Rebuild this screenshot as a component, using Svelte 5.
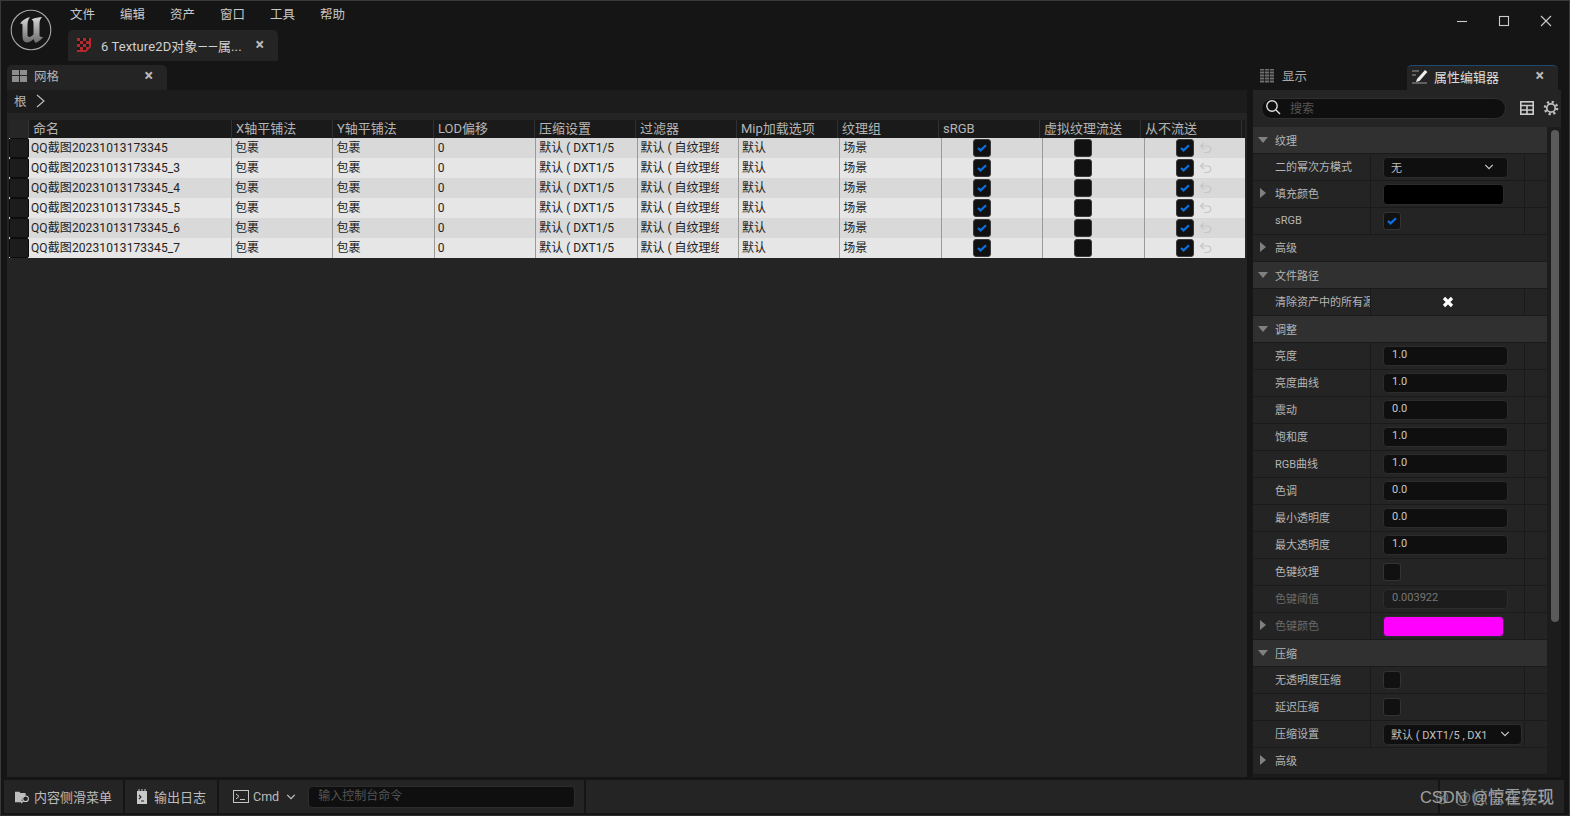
<script lang="ts">
  const menus = ['文件', '编辑', '资产', '窗口', '工具', '帮助'];
  const columns = ['X轴平铺法', 'Y轴平铺法', 'LOD偏移', '压缩设置', '过滤器', 'Mip加载选项', '纹理组', 'sRGB', '虚拟纹理流送', '从不流送'];
  const suffixes = ['', '_3', '_4', '_5', '_6', '_7'];
  const textCells = ['包裹', '包裹', '0', '默认 ( DXT1/5', '默认 ( 自纹理组', '默认', '场景'];

  const props = [
    { kind: 'section', label: '纹理' },
    { label: '二的幂次方模式', value: 'select', text: '无' },
    { label: '填充颜色', arrow: true, value: 'color', color: '#000' },
    { label: 'sRGB', value: 'check', on: true },
    { label: '高级', arrow: true, wide: true },
    { kind: 'section', label: '文件路径' },
    { label: '清除资产中的所有源', value: 'clear' },
    { kind: 'section', label: '调整' },
    { label: '亮度', value: 'num', text: '1.0' },
    { label: '亮度曲线', value: 'num', text: '1.0' },
    { label: '震动', value: 'num', text: '0.0' },
    { label: '饱和度', value: 'num', text: '1.0' },
    { label: 'RGB曲线', value: 'num', text: '1.0' },
    { label: '色调', value: 'num', text: '0.0' },
    { label: '最小透明度', value: 'num', text: '0.0' },
    { label: '最大透明度', value: 'num', text: '1.0' },
    { label: '色键纹理', value: 'check' },
    { label: '色键阈值', value: 'num', text: '0.003922', off: true },
    { label: '色键颜色', arrow: true, value: 'color', color: '#ff00ff', off: true },
    { kind: 'section', label: '压缩' },
    { label: '无透明度压缩', value: 'check' },
    { label: '延迟压缩', value: 'check' },
    { label: '压缩设置', value: 'select', text: '默认 ( DXT1/5 , DX1', long: true },
    { label: '高级', arrow: true, wide: true },
  ];
</script>

{#snippet tick()}
  <svg viewBox="0 0 12 10" width="10" height="8"><path d="M1 5 4.2 8 11 1.6" fill="none" stroke="#0a70e0" stroke-width="2.8"/></svg>
{/snippet}

{#snippet chevron()}
  <svg viewBox="0 0 12 8" width="10" height="6"><path d="M1 1.2 6 6.2 11 1.2" fill="none" stroke="#c4c4c4" stroke-width="1.7"/></svg>
{/snippet}

<div class="window">
  <header class="titlebar">
    <svg class="logo" viewBox="0 0 42 42" width="42" height="42">
      <defs>
        <linearGradient id="ue" x1="0" y1="0" x2="0" y2="1">
          <stop offset="0" stop-color="#d8d8d8"/>
          <stop offset="1" stop-color="#6a6a6a"/>
        </linearGradient>
      </defs>
      <circle cx="21" cy="21" r="19.8" fill="#161616" stroke="#a6a6a6" stroke-width="1.1"/>
      <path d="M10 15C12 11 16 9 20 8 18 11 17.5 13 17.5 16V26C17.5 28 19.5 28.5 21 27.5L23.5 25.5V14C23.5 12 22.5 11 21.5 10.5 25 8.5 29 8.5 32 8 30 10.5 29.5 12 29.5 15V27C30.5 28 32 28.5 33.5 28 31 30.5 28.5 32.5 26 34 24.5 33 24 31.5 23.5 30 21.5 32 19 33.5 17 33.5 13.5 33.5 12.5 30.5 12.5 27V16C12.5 15 11.5 14.5 10 15Z" fill="url(#ue)"/>
    </svg>
    <div class="title-main">
      <nav class="menu">
        {#each menus as m}<span>{m}</span>{/each}
      </nav>
      <div class="doc-tab">
        <svg viewBox="0 0 14 14" width="14" height="14">
          <rect width="14" height="14" fill="#b5282e"/>
          <path d="M3 0h3v3H3zM9 0h3v3H9zM0 3h3v3H0zM6 3h3v3H6zM3 6h3v3H3zM9 6h3v3H9zM0 9h3v3H0zM6 9h3v3H6z" fill="#1c1c1c"/>
          <path d="M9 14 14 9v5z" fill="#242424"/>
        </svg>
        <span class="doc-name">6 Texture2D对象——属...</span>
        <span class="x">×</span>
      </div>
    </div>
    <div class="win-btns">
      <svg viewBox="0 0 12 12" width="12" height="12"><path d="M1 6.5h10" stroke="#ccc" stroke-width="1.1"/></svg>
      <svg viewBox="0 0 12 12" width="12" height="12"><rect x="1.5" y="1.5" width="9" height="9" fill="none" stroke="#ccc" stroke-width="1.1"/></svg>
      <svg viewBox="0 0 12 12" width="12" height="12"><path d="M1 1 11 11M11 1 1 11" stroke="#ccc" stroke-width="1.1"/></svg>
    </div>
  </header>

  <main class="body">
    <section class="left">
      <div class="tab-row">
        <div class="panel-tab">
          <svg viewBox="0 0 15 12" width="15" height="12"><path d="M0 0h7v5H0zM8 0h7v5H8zM0 6h7v6H0zM8 6h7v6H8z" fill="#8d8d8d"/></svg>
          <span class="tab-name">网格</span>
          <span class="x">×</span>
        </div>
      </div>
      <div class="panel">
        <div class="crumbs">
          <span>根</span>
          <svg viewBox="0 0 9 14" width="9" height="14"><path d="M1 1 8 7 1 13" fill="none" stroke="#c0c0c0" stroke-width="1.1"/></svg>
        </div>
        <div class="grid">
          <div class="head">
            <div class="corner"></div>
            <div class="hcell name">命名</div>
            {#each columns as c}<div class="hcell">{c}</div>{/each}
          </div>
          {#each suffixes as s, i}
            <div class="row" class:alt={i % 2 === 1}>
              <div class="handle"></div>
              <div class="cell name">QQ截图20231013173345{s}</div>
              {#each textCells as t}<div class="cell"><span class="clip">{t}</span></div>{/each}
              <div class="cell boxed"><span class="big-check">{@render tick()}</span></div>
              <div class="cell boxed"><span class="big-check"></span></div>
              <div class="cell boxed last">
                <span class="big-check">{@render tick()}</span>
                <svg viewBox="0 0 13 12" width="13" height="12"><path d="M5 1 1.5 4 5 7M2 4h6.5a3 3 0 0 1 0 6.5H5" fill="none" stroke="#c6c6c6" stroke-width="1.2"/></svg>
              </div>
            </div>
          {/each}
        </div>
      </div>
    </section>

    <aside class="right">
      <div class="tab-row right-tabs">
        <div class="side-tab">
          <svg viewBox="0 0 14 14" width="14" height="14"><path d="M0 .5h14M0 3.5h14M0 6.5h14M0 9.5h14M0 12.5h14" stroke="#6f6f6f" stroke-width="2"/><path d="M4.5 0v14M9.5 0v14" stroke="#151515" stroke-width=".8"/></svg>
          <span>显示</span>
        </div>
        <div class="panel-tab active">
          <svg viewBox="0 0 16 15" width="16" height="15"><path d="M5 10 13 1l2.4 2L7.5 12l-3.5 1z" fill="#eee"/><path d="M0 2h7M0 6h4M0 14h15" stroke="#999" stroke-width="1.2"/></svg>
          <span class="tab-name">属性编辑器</span>
          <span class="x">×</span>
        </div>
      </div>
      <div class="details">
        <div class="search-row">
          <div class="search">
            <svg viewBox="0 0 16 16" width="16" height="16"><circle cx="7" cy="7" r="5.2" fill="none" stroke="#ddd" stroke-width="1.4"/><path d="M11 11l4 4" stroke="#ddd" stroke-width="1.4"/></svg>
            <span>搜索</span>
          </div>
          <svg class="layout-icon" viewBox="0 0 14 14" width="14" height="14"><rect x=".8" y=".8" width="12.4" height="12.4" fill="none" stroke="#ccc" stroke-width="1.6"/><path d="M0 4.5h14M0 9h14M7 4v10" stroke="#ccc" stroke-width="1.6"/></svg>
          <svg viewBox="0 0 16 16" width="16" height="16"><circle cx="8" cy="8" r="4.2" fill="none" stroke="#bbb" stroke-width="1.8"/><circle cx="8" cy="8" r="6" fill="none" stroke="#bbb" stroke-width="2.6" stroke-dasharray="2.2 2.5"/></svg>
        </div>
        <div class="prop-area">
          <div class="props">
            {#each props as p}
              {#if p.kind === 'section'}
                <div class="section">
                  <i class="tri-down"></i><span>{p.label}</span>
                </div>
              {:else}
                <div class="prop" class:off={p.off} class:wide={p.wide}>
                  <div class="label">
                    {#if p.arrow}<i class="tri"></i>{/if}
                    <span>{p.label}</span>
                  </div>
                  {#if !p.wide}
                    <div class="val" class:mid={p.value === 'clear'}>
                      {#if p.value === 'select'}
                        <div class="select" class:long={p.long}><span>{p.text}</span>{@render chevron()}</div>
                      {:else if p.value === 'color'}
                        <div class="swatch" style="background: {p.color}"></div>
                      {:else if p.value === 'check'}
                        <span class="small-check">{#if p.on}{@render tick()}{/if}</span>
                      {:else if p.value === 'num'}
                        <div class="num">{p.text}</div>
                      {:else if p.value === 'clear'}
                        <svg viewBox="0 0 12 12" width="12" height="12"><path d="M2 2 10 10M10 2 2 10" stroke="#fff" stroke-width="3.2"/></svg>
                      {/if}
                    </div>
                    <div class="reset"></div>
                  {/if}
                </div>
              {/if}
            {/each}
          </div>
          <div class="scroll"><div class="thumb"></div></div>
        </div>
      </div>
    </aside>
  </main>

  <footer class="bottom">
    <div class="bbtn drawer">
      <svg viewBox="0 0 17 16" width="17" height="16"><path d="M0 2h5l1 1.5h6V7a5 5 0 0 0-4 7H0z" fill="#bdbdbd"/><circle cx="12" cy="10" r="3.2" fill="none" stroke="#ccc" stroke-width="1.2"/><path d="M9.5 12.5 7 15" stroke="#ccc" stroke-width="1.2"/></svg>
      <span>内容侧滑菜单</span>
    </div>
    <div class="bbtn log">
      <svg viewBox="0 0 12 15" width="12" height="15"><path d="M1 2h10v13H1z" fill="#c9c9c9"/><path d="M3 0v3M6 0v3M9 0v3" stroke="#c9c9c9"/><path d="M3 6l2 2-2 2M5 12h3" fill="none" stroke="#222" stroke-width="1.1"/></svg>
      <span>输出日志</span>
    </div>
    <div class="cmd">
      <svg viewBox="0 0 16 13" width="16" height="13"><rect x=".5" y=".5" width="15" height="12" fill="none" stroke="#c4c4c4"/><path d="M3 4l3 2.4L3 9M7 9.5h5" fill="none" stroke="#c4c4c4"/></svg>
      <span>Cmd</span>
      {@render chevron()}
      <div class="console">输入控制台命令</div>
    </div>
    <div class="spacer"></div>
    <div class="corner-box"></div>
  </footer>

  <div class="watermark">
    <span>CSDN @惊霍存现</span>
    <span class="ghost" aria-hidden="true">⊗ @惊雷在实现</span>
  </div>
</div>

<style>
  :global(body) {
    margin: 0;
    background: #151515;
  }

  .window {
    position: relative;
    width: 1570px;
    height: 816px;
    box-sizing: border-box;
    border: 1px solid #3a3a3a;
    border-bottom-color: #2a2a2a;
    background: #151515;
    color: #c0c0c0;
    font-family: Roboto, "Noto Sans CJK SC", sans-serif;
    font-size: 12px;
    display: flex;
    flex-direction: column;
    overflow: hidden;
  }

  .titlebar {
    height: 64px;
    flex: none;
    display: flex;
  }

  .logo {
    margin: 8px 0 0 9px;
  }

  .title-main {
    margin-left: 16px;
    flex: 1;
  }

  .menu {
    display: flex;
    gap: 25px;
    height: 29px;
    padding: 3px 0 0 2px;
    box-sizing: border-box;
    font-size: 12.5px;
    color: #c8c8c8;
  }

  .doc-tab {
    width: 210px;
    height: 31px;
    box-sizing: border-box;
    padding: 0 14px 1px 9px;
    background: #242424;
    border-radius: 5px 5px 0 0;
    display: flex;
    align-items: center;
    color: #d0d0d0;
    font-size: 13px;
  }

  .doc-name {
    margin-left: 10px;
    flex: 1;
    white-space: nowrap;
    letter-spacing: 0.1px;
  }

  .x {
    font-size: 16px;
    font-weight: 700;
    color: #bbb;
    line-height: 1;
  }

  .win-btns {
    display: flex;
    gap: 30px;
    padding: 14px 17px 0 0;
    height: 12px;
  }

  .body {
    flex: 1;
    display: flex;
    min-height: 0;
    padding-left: 6px;
    padding-right: 9px;
  }

  .left {
    width: 1240px;
    display: flex;
    flex-direction: column;
  }

  .tab-row {
    height: 25px;
    flex: none;
    display: flex;
  }

  .panel-tab {
    width: 160px;
    box-sizing: border-box;
    background: #242424;
    border-radius: 5px 5px 0 0;
    padding: 0 14px 4px 5px;
    display: flex;
    align-items: center;
    color: #b5b5b5;
    font-size: 12.5px;
  }

  .tab-name {
    flex: 1;
    margin-left: 7px;
  }

  .panel {
    flex: 1;
    background: #242424;
  }

  .crumbs {
    height: 23px;
    box-sizing: border-box;
    padding: 0 0 2px 7px;
    background: #1c1c1c;
    display: flex;
    align-items: center;
    gap: 9px;
    font-size: 12.5px;
    color: #b8b8b8;
  }

  .grid {
    margin: 7px 2px 0;
  }

  .head {
    display: flex;
    height: 18px;
    background: #1a1a1a;
    color: #b5b5b5;
    font-size: 13px;
  }

  .corner {
    width: 20px;
    flex: none;
    background: #262626;
    border-right: 1px solid #333;
    box-sizing: border-box;
  }

  .hcell {
    width: 101px;
    flex: none;
    box-sizing: border-box;
    border-right: 1px solid #303030;
    padding: 0 0 0 4px;
    line-height: 17px;
    white-space: nowrap;
    overflow: hidden;
  }

  .row {
    display: flex;
    height: 20px;
    background: #d9d9d9;
    color: #222;
  }

  .row.alt {
    background: #e6e6e6;
  }

  .handle {
    width: 20px;
    flex: none;
    box-sizing: border-box;
    background: #1c1c1c;
    border: 1px solid #0c0c0c;
    border-radius: 2px;
  }

  .hcell.name {
    width: 203px;
  }

  .cell {
    width: 101.4px;
    flex: none;
    box-sizing: border-box;
    border-right: 1px solid #9a9a9a;
    padding-left: 3px;
    line-height: 20px;
    white-space: nowrap;
    overflow: hidden;
  }

  .clip {
    display: block;
    max-width: 78px;
    overflow: hidden;
  }

  .cell.name {
    width: 203px;
    padding-left: 2px;
    letter-spacing: 0.1px;
  }

  .cell.boxed {
    display: flex;
    align-items: center;
    gap: 5px;
    padding: 0 0 0 31px;
  }

  .cell.last {
    width: 101px;
    border-right: 0;
  }

  .big-check {
    width: 18px;
    height: 18px;
    flex: none;
    box-sizing: border-box;
    background: #111;
    border: 1px solid #3a3a3a;
    border-radius: 3px;
    display: flex;
    align-items: center;
    justify-content: center;
  }

  .right {
    margin-left: 6px;
    width: 308px;
    display: flex;
    flex-direction: column;
  }

  .right-tabs {
    justify-content: space-between;
    padding-right: 3px;
  }

  .side-tab {
    display: flex;
    align-items: center;
    gap: 8px;
    padding: 0 0 4px 7px;
    color: #a8a8a8;
    font-size: 12.5px;
  }

  .panel-tab.active {
    width: 151px;
    color: #ddd;
    border-top: 1px solid #1f4a70;
    font-size: 13px;
  }

  .panel-tab.active .tab-name {
    margin-left: 6px;
  }

  .details {
    flex: 1;
    min-height: 0;
    background: #1c1c1c;
    display: flex;
    flex-direction: column;
  }

  .search-row {
    height: 37px;
    flex: none;
    display: flex;
    align-items: center;
    gap: 9px;
    padding: 0 0 1px 8px;
    box-sizing: border-box;
    background: #242424;
  }

  .layout-icon {
    margin-left: 5px;
  }

  .search {
    width: 245px;
    height: 21px;
    box-sizing: border-box;
    background: #0f0f0f;
    border: 1px solid #303030;
    border-radius: 11px;
    display: flex;
    align-items: center;
    gap: 9px;
    padding: 0 0 2px 3px;
    color: #555;
  }

  .prop-area {
    flex: 1;
    min-height: 0;
    display: flex;
  }

  .props {
    width: 294px;
    flex: none;
  }

  .section {
    height: 27px;
    box-sizing: border-box;
    padding-bottom: 1px;
    background: #303030;
    border-bottom: 1px solid #1a1a1a;
    display: flex;
    align-items: center;
    font-size: 11px;
    color: #b5b5b5;
  }

  .section span {
    margin-left: 7px;
  }

  .tri {
    flex: none;
    width: 0;
    height: 0;
    margin: 0 9px 0 -15px;
    border-style: solid;
    border-width: 5px 0 5px 6px;
    border-color: transparent transparent transparent #808080;
  }

  .tri-down {
    flex: none;
    width: 0;
    height: 0;
    margin-left: 5px;
    border-style: solid;
    border-width: 6px 5px 0;
    border-color: #808080 transparent transparent;
  }

  .prop {
    height: 27px;
    box-sizing: border-box;
    background: #242424;
    border-bottom: 1px solid #1a1a1a;
    display: flex;
    font-size: 11px;
    color: #b5b5b5;
  }

  .prop.off {
    color: #6a6a6a;
  }

  .label {
    width: 118px;
    flex: none;
    box-sizing: border-box;
    padding: 0 0 2px 22px;
    display: flex;
    align-items: center;
    white-space: nowrap;
    overflow: hidden;
    border-right: 1px solid #1a1a1a;
  }

  .prop.wide .label {
    border-right: 0;
  }

  .val {
    width: 154px;
    flex: none;
    box-sizing: border-box;
    padding-left: 12px;
    display: flex;
    align-items: center;
    border-right: 1px solid #1a1a1a;
  }

  .val.mid {
    justify-content: center;
    padding-left: 0;
  }

  .select {
    width: 125px;
    height: 21px;
    box-sizing: border-box;
    background: #0f0f0f;
    border: 1px solid #2c2c2c;
    border-radius: 4px;
    display: flex;
    align-items: center;
    justify-content: space-between;
    padding: 0 13px 0 7px;
    color: #c0c0c0;
  }

  .select.long {
    width: 139px;
    padding-right: 11px;
    white-space: nowrap;
  }

  .swatch {
    width: 121px;
    height: 21px;
    box-sizing: border-box;
    border: 1px solid #2c2c2c;
    border-radius: 4px;
  }

  .small-check {
    width: 18px;
    height: 18px;
    box-sizing: border-box;
    background: #111;
    border: 1px solid #333;
    border-radius: 3px;
    display: flex;
    align-items: center;
    justify-content: center;
  }

  .num {
    width: 125px;
    height: 20px;
    box-sizing: border-box;
    background: #0f0f0f;
    border: 1px solid #2c2c2c;
    border-radius: 4px;
    padding-left: 8px;
    line-height: 16px;
    color: #c8c8c8;
  }

  .prop.off .num {
    background: #1c1c1c;
    color: #777;
  }

  .scroll {
    flex: 1;
    padding: 3px 4px 0;
  }

  .thumb {
    width: 8px;
    height: 492px;
    background: #5a5a5a;
    border-radius: 4px;
  }

  .bottom {
    height: 33px;
    flex: none;
    margin: 3px 5px 2px 3px;
    background: #242424;
    display: flex;
    align-items: stretch;
    font-size: 13px;
    color: #bcbcbc;
  }

  .bbtn {
    display: flex;
    align-items: center;
    padding: 0 11px;
    box-sizing: border-box;
    border-right: 2px solid #151515;
  }

  .drawer {
    width: 121px;
    gap: 4px;
    white-space: nowrap;
  }

  .log {
    width: 94px;
    gap: 6px;
    white-space: nowrap;
  }

  .cmd {
    width: 367px;
    flex: none;
    box-sizing: border-box;
    display: flex;
    align-items: center;
    gap: 4px;
    padding: 0 0 0 14px;
    border-right: 2px solid #151515;
  }

  .cmd > span {
    font-size: 12.5px;
    margin-right: 3px;
  }

  .console {
    margin-left: 8px;
    width: 267px;
    height: 22px;
    flex: none;
    box-sizing: border-box;
    background: #0f0f0f;
    border: 1px solid #2c2c2c;
    border-radius: 4px;
    padding-left: 9px;
    font-size: 12px;
    line-height: 19px;
    color: #555;
  }

  .spacer {
    width: 852px;
    flex: none;
    border-right: 2px solid #151515;
  }

  .corner-box {
    flex: 1;
  }

  .watermark {
    position: absolute;
    right: 15px;
    bottom: 5px;
    font-size: 16.5px;
    line-height: 26px;
    color: #a0a0a0;
    font-family: "Liberation Sans", "Noto Sans CJK SC", sans-serif;
    white-space: nowrap;
  }

  .ghost {
    position: absolute;
    right: 0;
    top: 1px;
    opacity: 0.6;
  }
</style>
